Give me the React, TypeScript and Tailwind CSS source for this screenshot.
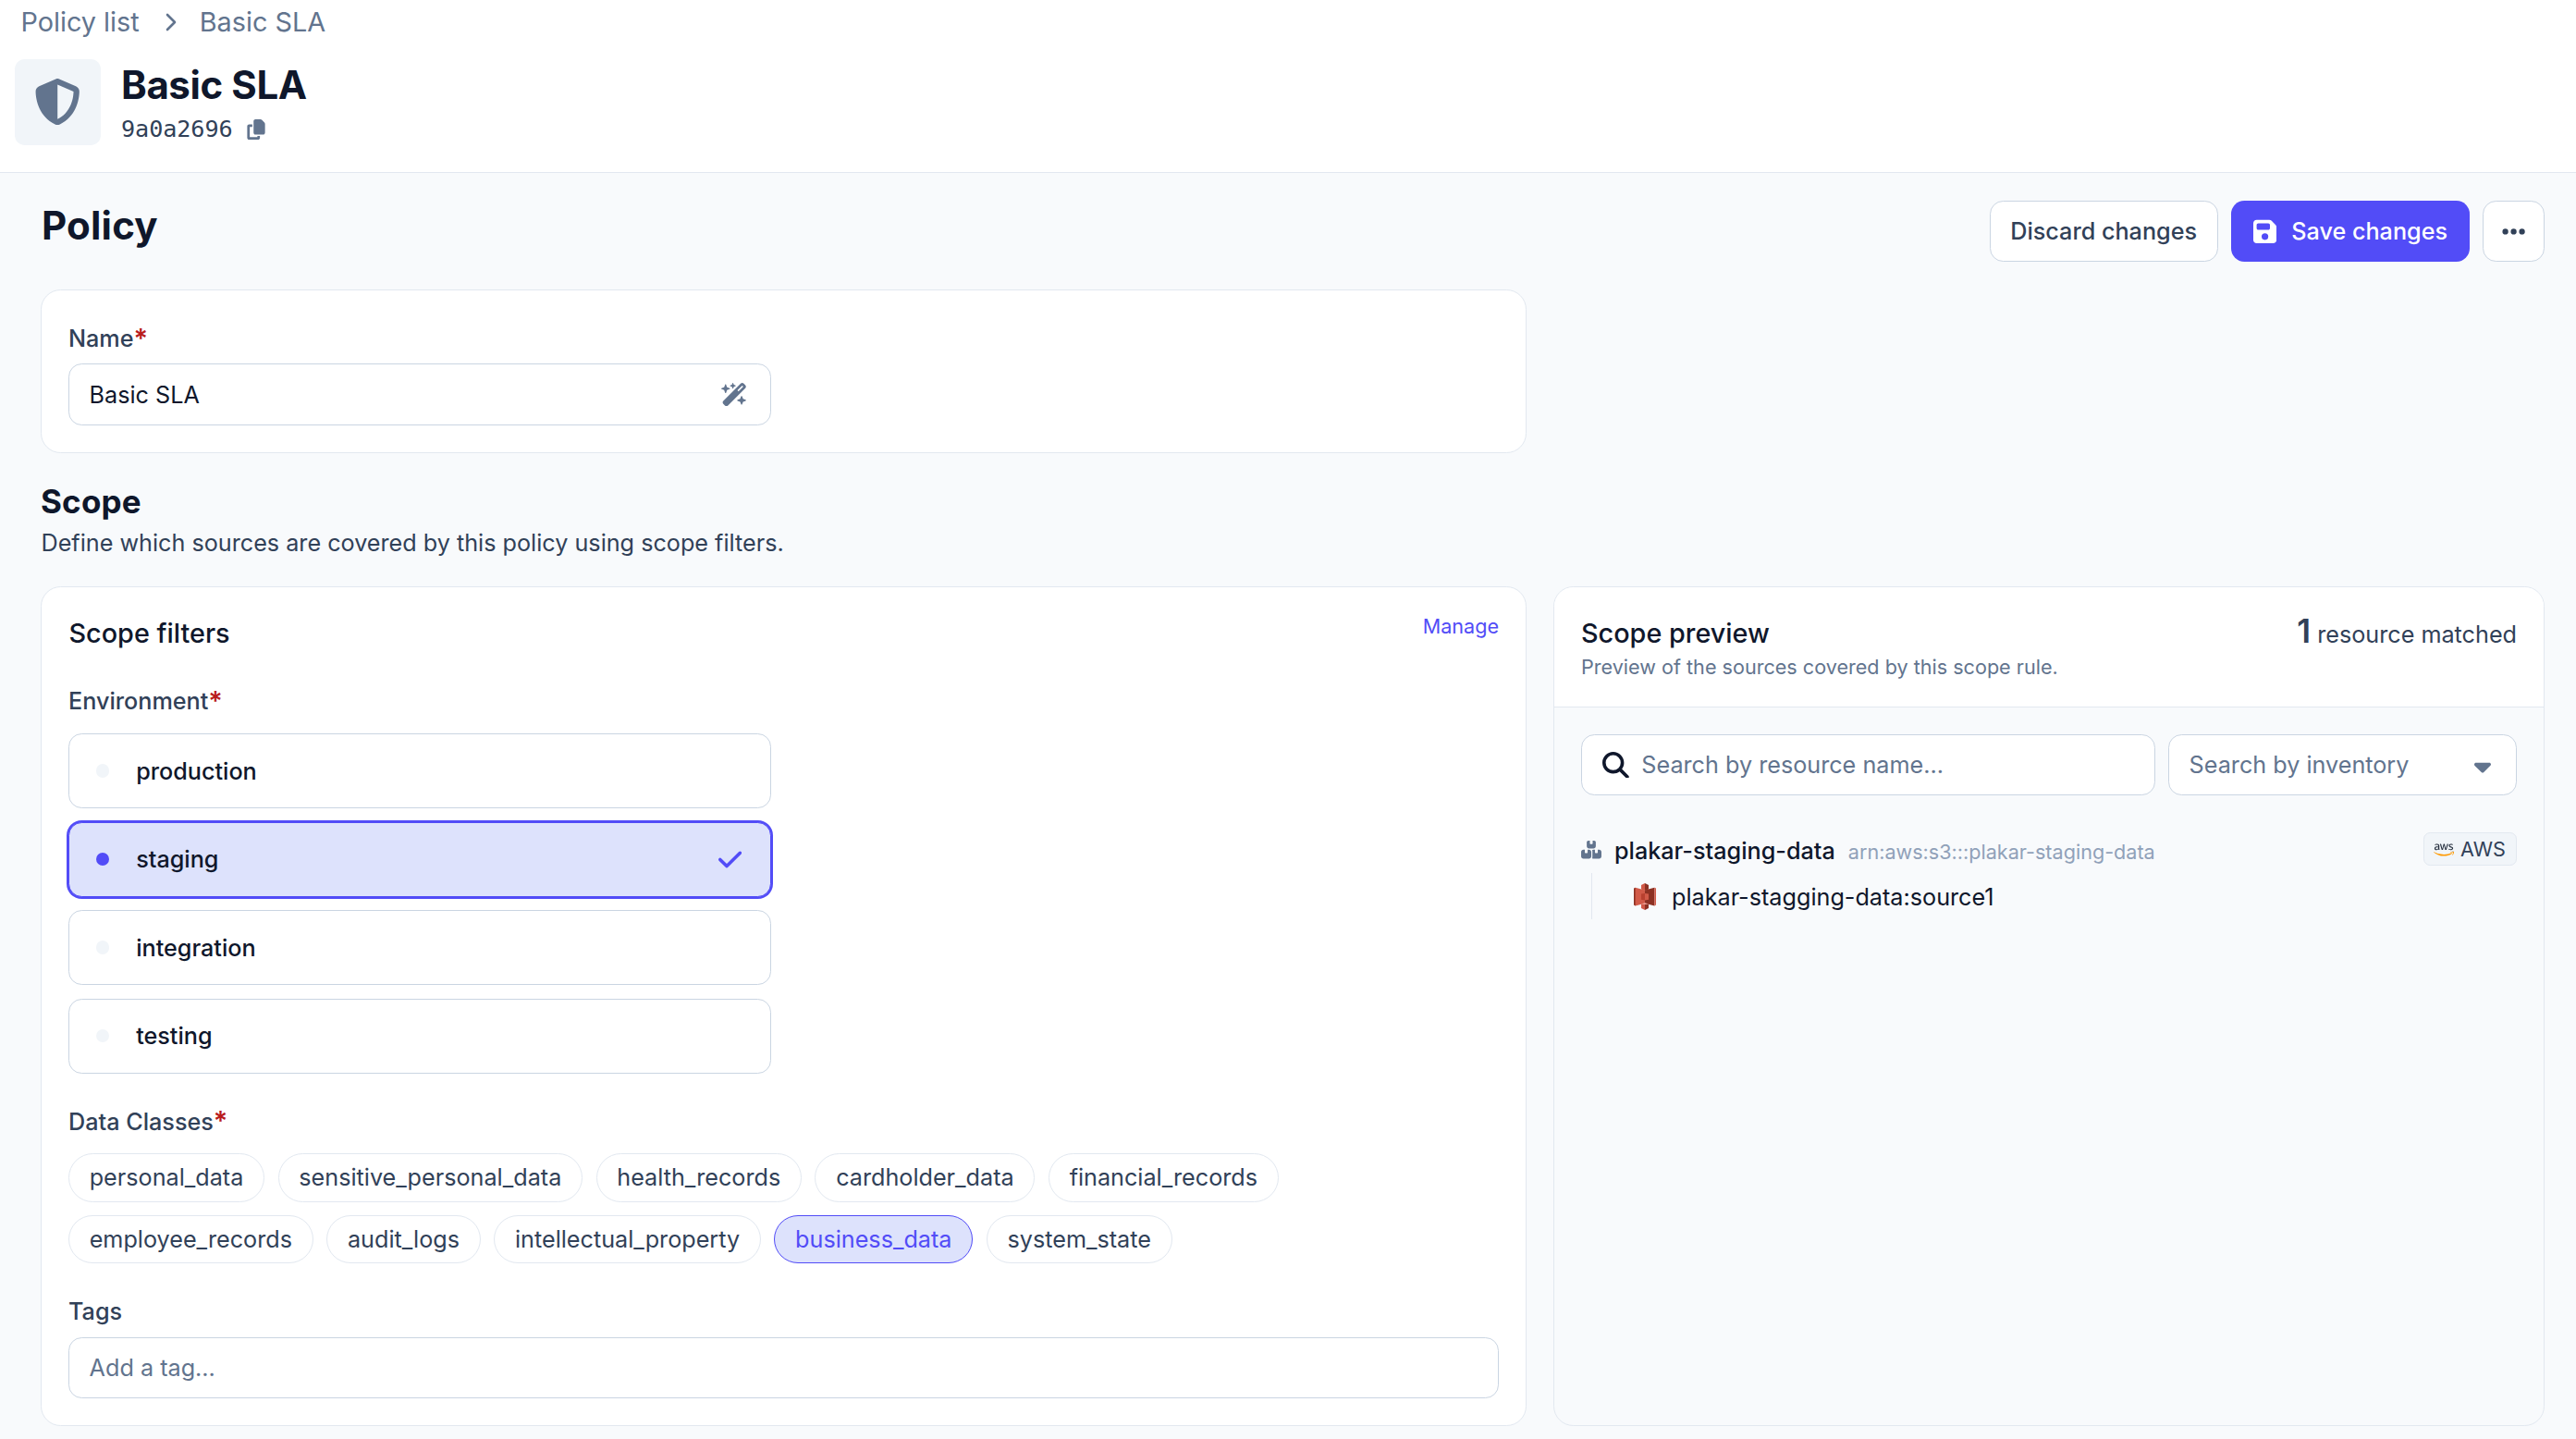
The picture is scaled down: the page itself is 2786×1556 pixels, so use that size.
import React from "react";
import {
  FaAws,
  FaBoxesStacked,
  FaCaretDown,
  FaCheck,
  FaCopy,
  FaEllipsis,
  FaFloppyDisk,
  FaMagnifyingGlass,
  FaShieldHalved,
  FaWandMagicSparkles,
} from "react-icons/fa6";

const environments = ["production", "staging", "integration", "testing"];
const selectedEnvironment = "staging";

const dataClasses = [
  "personal_data",
  "sensitive_personal_data",
  "health_records",
  "cardholder_data",
  "financial_records",
  "employee_records",
  "audit_logs",
  "intellectual_property",
  "business_data",
  "system_state",
];
const selectedClass = "business_data";

function Label({ text, required }: { text: string; required?: boolean }) {
  return (
    <div className="flex h-9 items-center font-medium text-slate-700">
      {text}
      {required && (
        <span className="text-[28.8px] leading-none font-semibold text-[#b91c1c]">*</span>
      )}
    </div>
  );
}

/** Red Amazon S3 bucket mark. */
function S3Icon() {
  return (
    <svg viewBox="0 0 24 29" className="h-[29px] w-6 shrink-0">
      <path d="M1.6 4.8 0 5.6v18l1.6.8 7-9.8z" fill="#8c3123" />
      <path d="M1.6 4.8 12 7.4v14.4L1.6 24.4z" fill="#d15a48" />
      <path d="M22.4 4.8 12 7.4v14.4l10.4 2.6z" fill="#8c3123" />
      <path d="m22.4 4.8 1.6.8v18l-1.6.8z" fill="#d15a48" />
      <path d="M12 0 8 2v4.400L12 8z" fill="#d15a48" />
      <path d="m12 0 4 2v4.400L12 8z" fill="#8c3123" />
      <path d="M12 21 8 22.600V27l4 2z" fill="#d15a48" />
      <path d="m12 21 4 1.600V27l-4 2z" fill="#8c3123" />
      <path d="m8 11.400 4-.5v7.500l-4-.6z" fill="#b8402f" />
      <path d="m16 11.400-4-.5v7.500l4-.6z" fill="#d15a48" />
      <path d="m8 22.600 4-1.300 4 1.300-4 .5z" fill="#f0a79c" />
    </svg>
  );
}

function AwsIcon() {
  return (
    <>
      <svg className="absolute h-0 w-0">
        <defs>
          <linearGradient id="aws-two-tone" x1="0" y1="0" x2="0" y2="1">
            <stop offset="0.63" stopColor="#252f3e" />
            <stop offset="0.63" stopColor="#f90" />
          </linearGradient>
        </defs>
      </svg>
      <FaAws fill="url(#aws-two-tone)" stroke="none" className="mt-0.5 h-[18px] w-[22px] shrink-0" />
    </>
  );
}

export default function App() {
  return (
    <div className="h-[1556px] w-[2786px] overflow-hidden bg-slate-50 font-['Inter',sans-serif] text-[25.2px] leading-9 text-slate-900">
      <header className="h-[187px] border-b border-slate-200 bg-white pt-0.5">
        <nav className="flex h-[43px] items-center pl-[22.5px] text-[28.8px] text-slate-500">
          <span>Policy list</span>
          <svg viewBox="0 0 12 20" className="mr-[24.5px] ml-[28.5px] h-5 w-3" fill="none">
            <path d="m2 2 8 8-8 8" stroke="currentColor" strokeWidth="2.600" strokeLinecap="round" strokeLinejoin="round" />
          </svg>
          <span>Basic SLA</span>
        </nav>
        <div className="mt-[19px] flex pl-4">
          <div className="flex h-[93px] w-[93px] items-center justify-center rounded-[10.8px] bg-slate-100">
            <FaShieldHalved className="h-[50.4px] w-[50.4px] text-slate-500" />
          </div>
          <div className="ml-[21px]">
            <h1 className="h-14 pl-px text-[42px] leading-[56px] font-bold tracking-[-0.4px]">Basic SLA</h1>
            <div className="flex h-[38px] items-center pt-px pl-px font-['DejaVu_Sans_Mono',monospace] tracking-[-0.1px] text-slate-700">
              9a0a2696
              <FaCopy className="ml-[15.5px] h-[22px] w-5 text-slate-500" />
            </div>
          </div>
        </div>
      </header>

      <main className="pt-[30px] pr-[34px] pl-11">
        <div className="flex items-start justify-between">
          <h2 className="h-[54px] pl-px text-[42px] leading-[54px] font-bold tracking-[0.2px]">Policy</h2>
          <div className="flex gap-[14.4px] font-medium">
            <button className="h-[66px] w-[247px] rounded-[14.4px] border border-slate-300 bg-white font-medium text-slate-700">
              Discard changes
            </button>
            <button className="flex h-[66px] w-[257.600px] items-center rounded-[14.4px] bg-[#524cf7] pl-6 font-medium text-white">
              <FaFloppyDisk className="mr-4 h-[28.8px] w-[25.2px]" />
              Save changes
            </button>
            <button className="flex h-[66px] w-[67px] items-center justify-center rounded-[14.4px] border border-slate-300 bg-white text-slate-700">
              <FaEllipsis className="h-[28.8px] w-[25.2px]" />
            </button>
          </div>
        </div>

        <section className="mt-[30px] h-[177px] w-[1607px] rounded-[21.6px] border border-slate-200 bg-white px-[29px] pt-[34px]">
          <Label text="Name" required />
          <div className="mt-[9px] flex h-[67px] w-[760px] items-center justify-between rounded-[14.4px] border border-slate-300 bg-white pr-[25px] pl-[21.6px]">
            <span>Basic SLA</span>
            <FaWandMagicSparkles className="h-[25.2px] w-[28.4px] text-slate-500" />
          </div>
        </section>

        <h2 className="mt-[26px] h-[53px] text-[35px] leading-[52px] font-bold tracking-[0.2px]">Scope</h2>
        <p className="pl-[0.5px] text-slate-700">Define which sources are covered by this policy using scope filters.</p>

        <div className="mt-[29px] grid h-[908px] grid-cols-[1607px_1072px] gap-[29px]">
          <section className="rounded-[21.6px] border border-slate-200 bg-white px-[29px] pt-7">
            <div className="flex items-start justify-between">
              <h3 className="pl-[0.5px] text-[28.8px] leading-[43px] font-medium">Scope filters</h3>
              <a className="text-[21.6px] leading-[29px] text-[#524cf7]">Manage</a>
            </div>

            <div className="mt-[34px]">
              <Label text="Environment" required />
            </div>
            <div className="mt-[17px] flex w-[760px] flex-col gap-[14.6px]">
              {environments.map((name) => {
                const selected = name === selectedEnvironment;
                return (
                  <div
                    key={name}
                    className={
                      "flex h-[81px] items-center rounded-[14.4px] border pr-[31px] pl-[29px] " +
                      (selected
                        ? "border-[#524cf7] bg-[#dde2fc] ring-2 ring-[#524cf7]"
                        : "border-slate-300 bg-white")
                    }
                  >
                    <span
                      className={
                        "h-[14.4px] w-[14.4px] rounded-full " +
                        (selected ? "bg-[#524cf7]" : "bg-slate-100")
                      }
                    />
                    <span className="ml-[28.8px] grow font-medium">{name}</span>
                    {selected && <FaCheck className="h-[28.8px] w-[25.2px] text-[#524cf7]" />}
                  </div>
                );
              })}
            </div>

            <div className="mt-[34px]">
              <Label text="Data Classes" required />
            </div>
            <div className="mt-[16.5px] flex flex-wrap gap-x-[14.6px] gap-y-[14.4px]">
              {dataClasses.map((name) => (
                <span
                  key={name}
                  className={
                    "flex h-[52.4px] items-center rounded-full border px-[21.7px] " +
                    (name === selectedClass
                      ? "border-[#524cf7] bg-[#dde2fc] text-[#524cf7]"
                      : "border-slate-200 bg-white text-slate-700")
                  }
                >
                  {name}
                </span>
              ))}
            </div>

            <div className="mt-[33.5px]">
              <Label text="Tags" />
            </div>
            <div className="mt-[10px] flex h-[66px] items-center rounded-[14.4px] border border-slate-300 bg-white px-[21.6px] text-slate-500">
              Add a tag...
            </div>
          </section>

          <section className="overflow-hidden rounded-[21.6px] border border-slate-200">
            <div className="flex h-[130px] items-start justify-between border-b border-slate-200 bg-white px-[29px] pt-7">
              <div>
                <h3 className="text-[28.8px] leading-[43px] font-medium">Scope preview</h3>
                <p className="pt-px text-[21.6px] leading-[29px] text-slate-500">
                  Preview of the sources covered by this scope rule.
                </p>
              </div>
              <div className="flex items-baseline gap-[7px] text-slate-700">
                <span className="text-[35px] leading-[38px] font-semibold">1</span>
                <span>resource matched</span>
              </div>
            </div>

            <div className="px-[29px] pt-[29px]">
              <div className="flex gap-[14.4px]">
                <div className="flex h-[66px] grow items-center rounded-[14.4px] border border-slate-300 bg-white pl-[22px] text-slate-500">
                  <FaMagnifyingGlass className="mr-[13.5px] h-[28.8px] w-[28.8px] text-slate-900" />
                  Search by resource name...
                </div>
                <div className="flex h-[66px] w-[377px] items-center justify-between rounded-[14.4px] border border-slate-300 bg-white pr-[27px] pl-[21.6px] text-slate-500">
                  Search by inventory
                  <FaCaretDown className="mt-0.5 h-[28.8px] w-[18px]" />
                </div>
              </div>

              <div className="mt-[40px] flex h-10 items-start">
                <div className="flex h-10 grow items-center">
                  <FaBoxesStacked className="mb-0.5 h-[19.5px] w-[22px] text-slate-500" />
                  <span className="ml-3.5 font-medium">plakar-staging-data</span>
                  <span className="ml-[14px] pt-[2px] text-[21.6px] text-slate-400">
                    arn:aws:s3:::plakar-staging-data
                  </span>
                </div>
                <div className="flex h-9 w-[101px] items-center gap-[7px] rounded-[7.2px] border border-slate-200 bg-slate-100 pl-2.5 text-[21.6px] text-slate-700">
                  <AwsIcon />
                  AWS
                </div>
              </div>
              <div className="mt-1 ml-[11px] flex h-[50px] items-center border-l border-slate-200 pl-[45px]">
                <S3Icon />
                <span className="ml-[17px] pt-px">plakar-stagging-data:source1</span>
              </div>
            </div>
          </section>
        </div>
      </main>
    </div>
  );
}
